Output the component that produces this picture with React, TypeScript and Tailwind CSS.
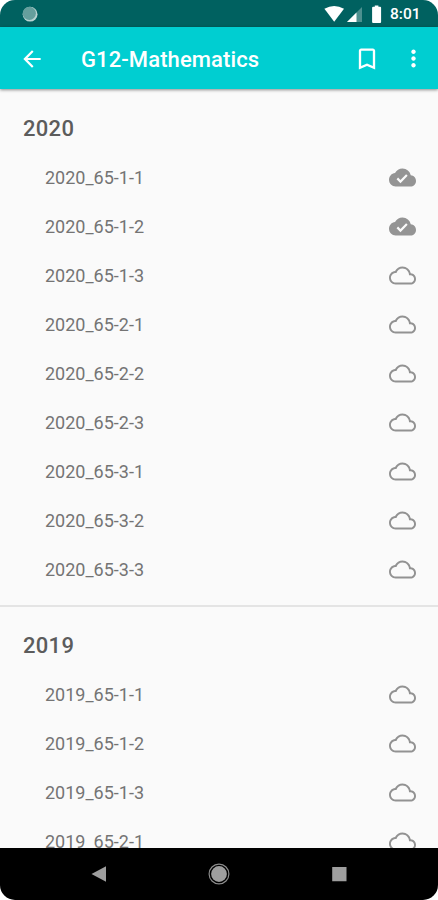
import React from "react";

const CLOUD =
  "M19.35 10.04C18.67 6.59 15.64 4 12 4 9.11 4 6.6 5.64 5.35 8.04 2.34 8.36 0 10.91 0 14c0 3.31 2.69 6 6 6h13c2.76 0 5-2.24 5-5 0-2.64-2.05-4.78-4.65-4.96z";

function CloudIcon({ done }: { done: boolean }) {
  return (
    <svg viewBox="0 0 24 24" className="h-[27px] w-[27px] shrink-0">
      {done ? (
        <>
          <path fill="#949494" d={CLOUD} />
          <path fill="#fafafa" d="M10.2 17 6.7 13.5l1.4-1.4 2.1 2.1 5-5.2 1.4 1.4z" />
        </>
      ) : (
        <path
          fill="#929292"
          d="M19.35 10.04C18.67 6.59 15.64 4 12 4 9.11 4 6.61 5.64 5.36 8.04 2.35 8.36 0 10.9 0 14c0 3.31 2.69 6 6 6h13c2.76 0 5-2.24 5-5 0-2.64-2.05-4.78-4.65-4.96zM19 18.3H6c-2.35 0-4.3-1.95-4.3-4.3s1.95-4.3 4.3-4.3h.6C7.3 7.4 9.4 5.7 12 5.7c3.2 0 5.8 2.6 5.8 5.8v.2H19c1.8 0 3.3 1.5 3.3 3.3s-1.5 3.3-3.3 3.3z"
        />
      )}
    </svg>
  );
}

interface SectionProps {
  year: string;
  items: string[];
  downloaded?: number;
}

function Section({ year, items, downloaded = 0 }: SectionProps) {
  return (
    <section>
      <h2 className="flex h-[63px] items-center pt-[15px] pl-[23px] text-[22px] leading-none font-medium tracking-[0.3px] text-[#5c5c5c]">
        {year}
      </h2>
      <ul>
        {items.map((item, i) => (
          <li key={item} className="flex h-[49px] items-center justify-between pr-[22px] pl-[45px]">
            <span className="text-[18px] leading-none text-[#747474]">{item}</span>
            <CloudIcon done={i < downloaded} />
          </li>
        ))}
      </ul>
    </section>
  );
}

const items2020 = [
  "2020_65-1-1", "2020_65-1-2", "2020_65-1-3",
  "2020_65-2-1", "2020_65-2-2", "2020_65-2-3",
  "2020_65-3-1", "2020_65-3-2", "2020_65-3-3",
];
const items2019 = ["2019_65-1-1", "2019_65-1-2", "2019_65-1-3", "2019_65-2-1"];

export default function App() {
  return (
    <div className="h-[900px] w-[438px] overflow-hidden bg-white">
      <div className="flex h-full flex-col overflow-hidden rounded-[15px] bg-[#fafafa] font-[Roboto,sans-serif]">
        <div className="flex h-[27px] shrink-0 items-center bg-[#006160] pl-[21px] text-white">
          <svg viewBox="0 0 18 18" className="h-[18px] w-[18px]">
            <circle cx="9.1" cy="9.2" r="7.4" fill="#b9d3d2" />
            <circle cx="8.3" cy="8.3" r="6.6" fill="#659f9d" />
          </svg>
          <svg viewBox="0 0 62 20" className="ml-auto h-5 w-[62px]">
            <path fill="#fff" d="M1.4 4.8Q11.2 -.6 21 4.8L11.2 17.8z" />
            <path fill="#4d908f" d="M39 3v15H24z" />
            <path fill="#fff" d="M33.5 8.5V18H24z" />
            <path fill="#fff" d="M50.1 2.8h1.7V1.4h3.6v1.4h1.7q1 0 1 1v14.2q0 1-1 1h-7q-1 0-1-1V3.8q0-1 1-1z" />
          </svg>
          <span className="w-[53px] pt-[2px] pl-[5px] text-[15.5px] leading-none font-medium">8:01</span>
        </div>

        <header className="z-10 flex h-[62px] shrink-0 items-center bg-[#00ced1] pr-[11px] pl-[19px] text-white shadow-[0_1px_3px_rgba(0,0,0,0.45)]">
          <svg viewBox="0 0 24 24" className="mt-px h-[26px] w-[26px]" fill="currentColor">
            <path d="M20 11H7.83l5.59-5.59L12 4l-8 8 8 8 1.41-1.41L7.83 13H20v-2z" />
          </svg>
          <h1 className="ml-9 pt-[3px] text-[22px] leading-none font-medium tracking-[0.1px]">G12-Mathematics</h1>
          <svg viewBox="0 0 24 24" className="mt-px ml-auto h-7 w-7" fill="currentColor">
            <path d="M17 3H7c-1.1 0-1.99.9-1.99 2L5 21l7-3 7 3V5c0-1.1-.9-2-2-2zm0 15l-5-2.18L7 18V5h10v13z" />
          </svg>
          <svg viewBox="0 0 24 24" className="mt-px ml-[19px] h-[27px] w-[27px]" fill="currentColor">
            <path d="M12 8c1.1 0 2-.9 2-2s-.9-2-2-2-2 .9-2 2 .9 2 2 2zm0 2c-1.1 0-2 .9-2 2s.9 2 2 2 2-.9 2-2-.9-2-2-2zm0 6c-1.1 0-2 .9-2 2s.9 2 2 2 2-.9 2-2-.9-2-2-2z" />
          </svg>
        </header>

        <main className="min-h-0 flex-1 overflow-hidden pt-px">
          <Section year="2020" items={items2020} downloaded={2} />
          <div className="mt-[11px] h-[2px] bg-[#e4e4e4]" />
          <Section year="2019" items={items2019} />
        </main>

        <nav className="flex h-[52px] shrink-0 items-center justify-between bg-black pr-[90px] pl-[90px]">
          <svg viewBox="0 0 18 18" className="h-[18px] w-[18px]" fill="#9e9e9e">
            <path d="M1.5 9 16 1.2v15.6z" />
          </svg>
          <svg viewBox="0 0 24 24" className="h-6 w-6">
            <circle cx="12" cy="12" r="9.9" fill="none" stroke="#8a8a8a" strokeWidth="1.2" />
            <circle cx="12" cy="12" r="7.9" fill="#9e9e9e" />
          </svg>
          <svg viewBox="0 0 18 18" className="h-[18px] w-[18px]" fill="#9e9e9e">
            <path d="M2.2 2h14.3v14.3H2.2z" />
          </svg>
        </nav>
      </div>
    </div>
  );
}
